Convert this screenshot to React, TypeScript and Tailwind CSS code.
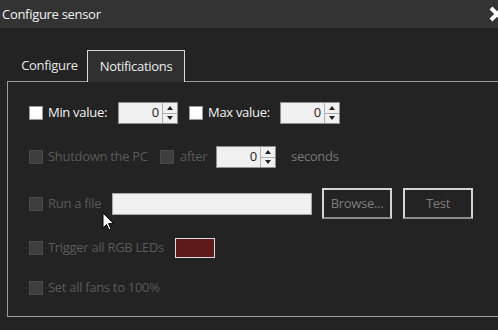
import React from 'react';

const Check: React.FC<{ disabled?: boolean }> = ({ disabled }) => (
  <div
    className={`w-[14px] h-[14px] shrink-0 border ${
      disabled ? 'bg-[#3e3e3e] border-[#4a4a4a]' : 'bg-white border-[#9a9a9a]'
    }`}
  />
);

const Spinner: React.FC<{ value: string }> = ({ value }) => (
  <div className="flex w-[60px] h-[22px] border border-[#8e8e8e] bg-[#f0f0f0] shrink-0">
    <div className="flex-1 flex items-center justify-end pr-[3px] text-[13px] text-[#222]">{value}</div>
    <div className="w-[15px] flex flex-col border-l border-[#b0b0b0]">
      <div className="flex-1 flex items-center justify-center border-b border-[#b0b0b0]">
        <svg width="6" height="4" viewBox="0 0 6 4"><path d="M3 0L6 4H0Z" fill="#222" /></svg>
      </div>
      <div className="flex-1 flex items-center justify-center">
        <svg width="6" height="4" viewBox="0 0 6 4"><path d="M0 0H6L3 4Z" fill="#222" /></svg>
      </div>
    </div>
  </div>
);

export default function App() {
  return (
    <div
      className="relative w-[498px] h-[330px] overflow-hidden bg-[#232323] text-[13px] tracking-[-0.3px]"
      style={{ fontFamily: '"Open Sans", "Noto Sans", sans-serif' }}
    >
      {/* Title bar */}
      <div className="h-[28px] bg-[#333333] flex items-center pl-[2px] pr-0">
        <span className="text-[13px] text-[#f2f2f2] leading-none">Configure sensor</span>
        <svg className="ml-auto mr-[-8px]" width="18" height="18" viewBox="0 0 18 18">
          <path d="M3 3L15 15M15 3L3 15" stroke="#fff" strokeWidth="4" />
        </svg>
      </div>

      {/* Tabs */}
      <div className="flex items-end h-[53px] pl-[12px]">
        <div className="w-[75px] h-[31px] flex items-center justify-center text-[#e6e6e6]">Configure</div>
        <div className="w-[98px] h-[32px] flex items-center justify-center bg-[#303030] border border-b-0 border-[#d8d8d8] text-[#ececec] relative z-10 mb-[-1px]">
          Notifications
        </div>
      </div>

      {/* Panel */}
      <div className="ml-[7px] w-[520px] h-[236px] border border-[#9c9c9c] pl-[21px] pt-[20px]">
        <div className="flex items-center h-[22px]">
          <Check />
          <span className="ml-[5px] w-[70px] text-[#f2f2f2]">Min value:</span>
          <Spinner value="0" />
          <div className="ml-[11px]"><Check /></div>
          <span className="ml-[5px] w-[72px] text-[#f2f2f2]">Max value:</span>
          <Spinner value="0" />
        </div>

        <div className="flex items-center h-[22px] mt-[22px]">
          <Check disabled />
          <span className="ml-[5px] w-[112px] text-[#5a5a5a]">Shutdown the PC</span>
          <Check disabled />
          <span className="ml-[6px] w-[36px] text-[#5a5a5a]">after</span>
          <Spinner value="0" />
          <span className="ml-[15px] text-[#777777]">seconds</span>
        </div>

        <div className="flex items-center h-[31px] mt-[20px]">
          <Check disabled />
          <span className="ml-[5px] w-[64px] text-[#5a5a5a]">Run a file</span>
          <div className="w-[200px] h-[22px] bg-[#f0f0f0] border border-[#a8a8a8]" />
          <div className="ml-[10px] w-[70px] h-[31px] border-2 border-[#d4d4d4] border-b-[#8a8a8a] flex items-center justify-center text-[#7c7c7c]">
            Browse...
          </div>
          <div className="ml-[11px] w-[70px] h-[31px] border-2 border-[#d4d4d4] border-b-[#8a8a8a] flex items-center justify-center text-[#7c7c7c]">
            Test
          </div>
        </div>

        <div className="flex items-center h-[21px] mt-[18px]">
          <Check disabled />
          <span className="ml-[5px] w-[127px] text-[#5a5a5a]">Trigger all RGB LEDs</span>
          <div className="w-[40px] h-[20px] bg-[#5e1a1a] border border-[#dcdcdc]" />
        </div>

        <div className="flex items-center h-[21px] mt-[19px]">
          <Check disabled />
          <span className="ml-[5px] text-[#5a5a5a]">Set all fans to 100%</span>
        </div>
      </div>

      {/* Mouse cursor */}
      <svg className="absolute left-[102px] top-[212px]" width="13" height="19" viewBox="0 0 13 19">
        <path d="M1 1V16L4.5 12.5L7 18L9 17L6.6 11.6H11.5Z" fill="#fff" stroke="#000" strokeWidth="1" strokeLinejoin="round" />
      </svg>
    </div>
  );
}
